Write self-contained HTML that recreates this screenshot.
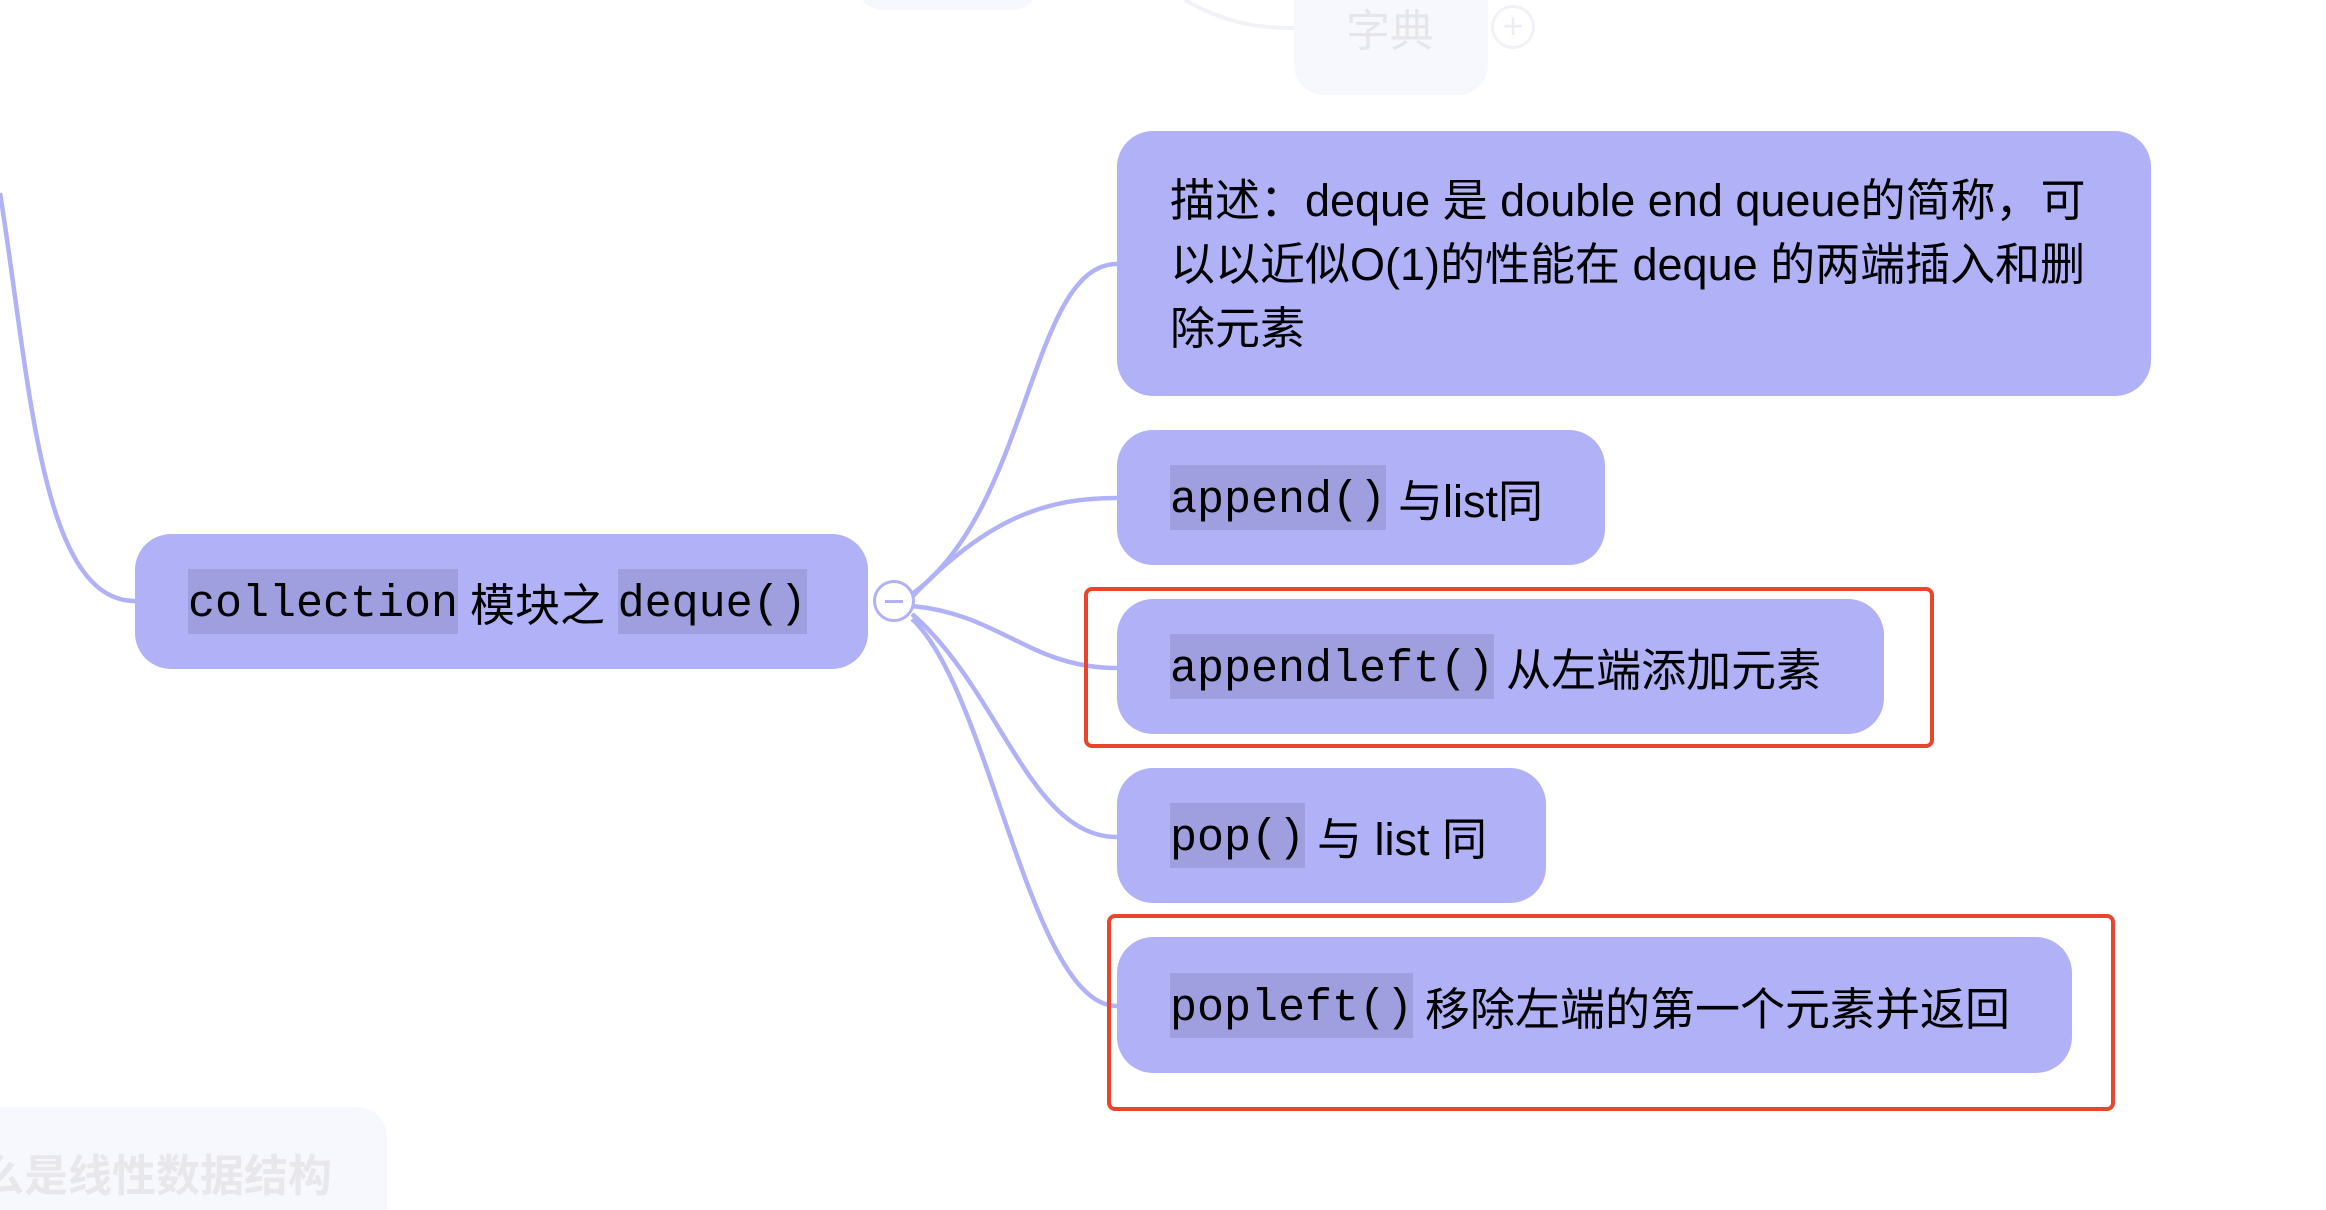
<!DOCTYPE html>
<html><head><meta charset="utf-8"><style>
html,body{margin:0;padding:0;background:#fff;width:2326px;height:1210px;overflow:hidden;position:relative;font-family:"Liberation Sans","Noto Sans CJK SC",sans-serif;}
.n{position:absolute;background:#b1b1f7;border-radius:36px;box-sizing:border-box;display:flex;align-items:center;padding-left:53px;font-size:45px;color:#000;white-space:nowrap;}
.c{font-family:"Liberation Mono","Noto Sans CJK SC",monospace;font-size:45px;background:#9f9fdf;display:inline-block;line-height:72px;height:65px;overflow:hidden;margin-right:12px;}
.r{position:absolute;border:4.5px solid #e8442e;border-radius:8px;box-sizing:border-box;}
.f{position:absolute;background:#f7f8fd;border-radius:30px;}
</style></head><body>
<svg width="2326" height="1210" style="position:absolute;left:0;top:0">
<g fill="none" stroke="#b1b1f7" stroke-width="4.5">
<path d="M0 193 C30 380 40 601 135 601"/>
<path d="M912 594 C1030 510 1030 264 1117 264"/>
<path d="M912 597 C990 515 1050 498 1117 498"/>
<path d="M912 606 C1000 614 1030 668 1117 668"/>
<path d="M912 614 C1000 690 1030 837 1117 837"/>
<path d="M912 619 C990 690 1030 1006 1117 1006"/>
</g>
<path d="M1185 0 C1220 20 1250 28 1294 28" fill="none" stroke="#f1f2f8" stroke-width="4"/>
</svg>
<div class="f" style="left:857px;top:-40px;width:181px;height:50px"></div>
<div class="f" style="left:1294px;top:-40px;width:194px;height:135px;"></div>
<div style="position:absolute;left:1346px;top:-5px;font-size:44px;color:#e6e6ea">字典</div>
<div style="position:absolute;left:1491px;top:5px;width:44px;height:44px;border:3px solid #f1f2f8;border-radius:50%;box-sizing:border-box;color:#eceef4;font-size:36px;line-height:36px;text-align:center">+</div>
<div class="f" style="left:-30px;top:1107px;width:417px;height:140px"></div>
<div style="position:absolute;left:-20px;top:1140px;font-size:44px;color:#e8e8ec;font-weight:bold">么是线性数据结构</div>

<div class="n" style="left:135px;top:534px;width:733px;height:135px;"><span class="c">collection</span>模块之&nbsp;<span class="c" style="margin-right:0">deque()</span></div>
<div style="position:absolute;left:873px;top:580px;width:42px;height:42px;border:3px solid #b1b1f7;border-radius:50%;background:#fff;box-sizing:border-box"><div style="position:absolute;left:9px;top:17px;width:18px;height:3px;background:#b1b1f7"></div></div>

<div class="n" style="left:1117px;top:131px;width:1034px;height:265px;align-items:flex-start;padding-top:38px;"><div style="line-height:64px">描述：deque 是 double end queue的简称，可<br>以以近似O(1)的性能在 deque 的两端插入和删<br>除元素</div></div>
<div class="n" style="left:1117px;top:430px;width:488px;height:135px;"><span class="c">append()</span>与list同</div>
<div class="n" style="left:1117px;top:599px;width:767px;height:135px;"><span class="c">appendleft()</span>从左端添加元素</div>
<div class="n" style="left:1117px;top:768px;width:429px;height:135px;"><span class="c">pop()</span>与 list 同</div>
<div class="n" style="left:1117px;top:937px;width:955px;height:136px;"><span class="c">popleft()</span>移除左端的第一个元素并返回</div>
<div class="r" style="left:1084px;top:587px;width:850px;height:161px"></div>
<div class="r" style="left:1107px;top:914px;width:1008px;height:197px"></div>
</body></html>
